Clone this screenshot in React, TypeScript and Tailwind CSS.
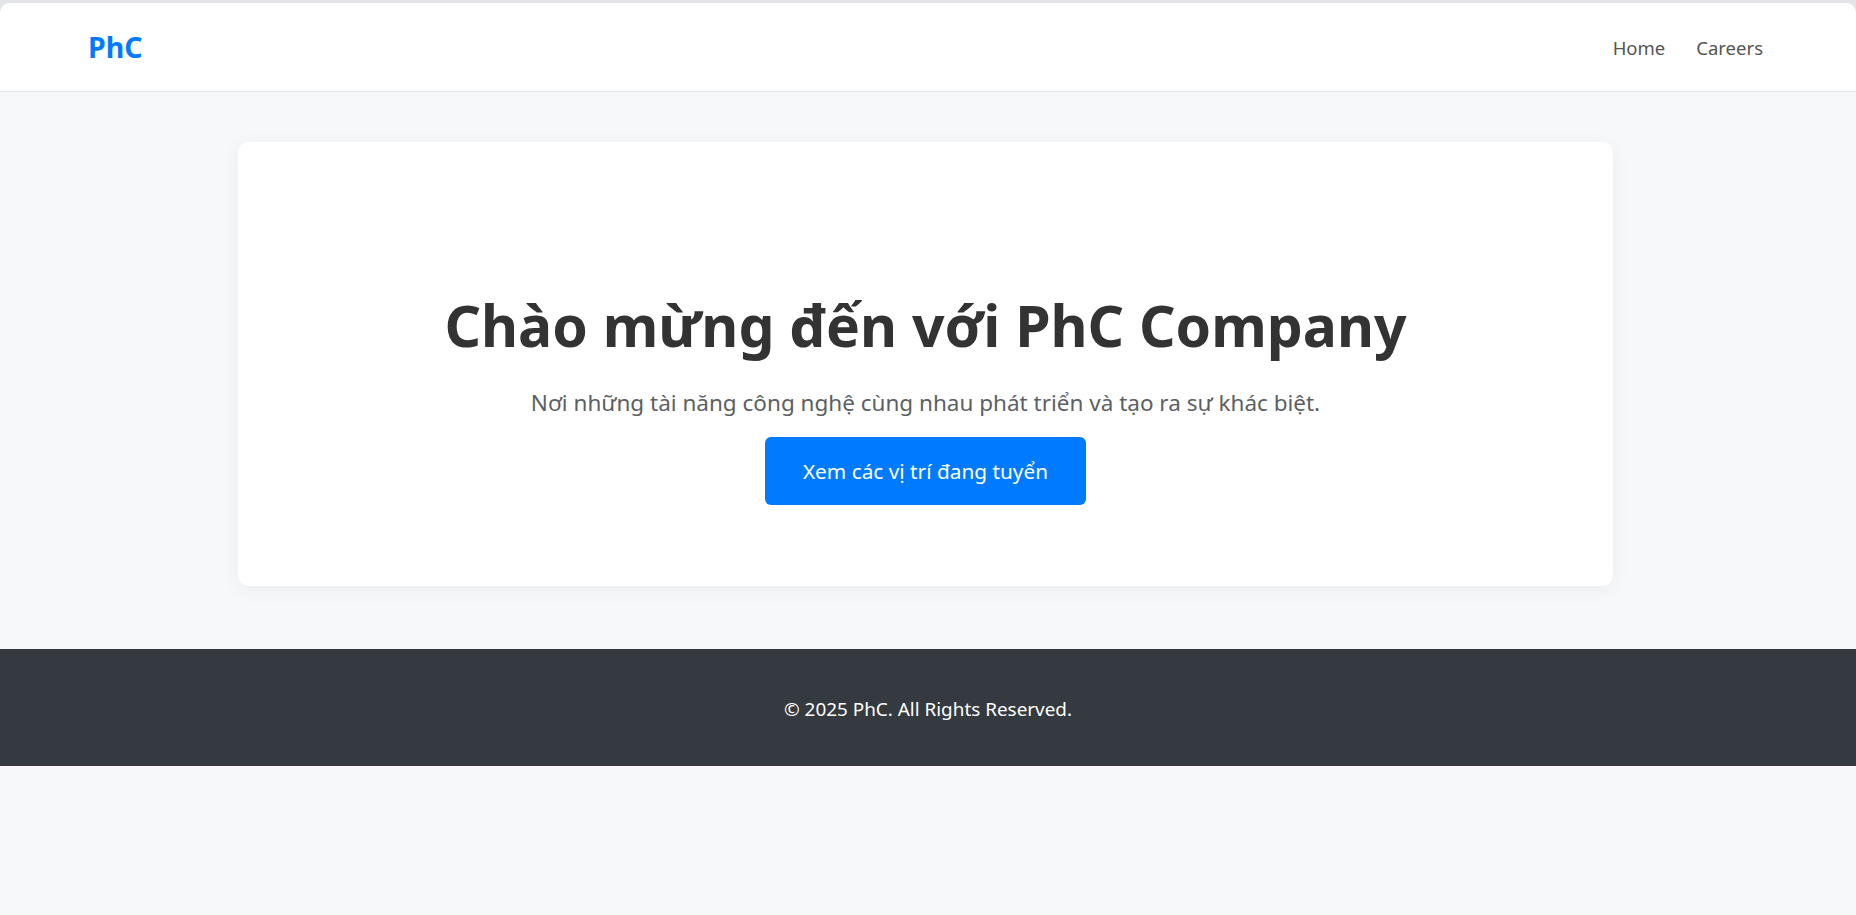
import React from "react";

const font = { fontFamily: '"Noto Sans", "Open Sans", sans-serif' };

const navLinks = ["Home", "Careers"];

const App: React.FC = () => {
  return (
    <div className="min-h-screen bg-[#e4e5e8] pt-[3px]" style={font}>
      <div className="min-h-[912px] rounded-t-[10px] overflow-hidden bg-[#f7f8fa] flex flex-col">
        <header className="h-[89px] shrink-0 bg-white border-b border-[#e3e5e8] flex items-center justify-between pl-[88px] pr-[93px]">
          <a href="#" className="text-[28.5px] font-bold text-[#007bff] leading-none">
            PhC
          </a>
          <nav className="flex items-center gap-[31px] mt-[2px]">
            {navLinks.map((link) => (
              <a key={link} href="#" className="text-[18.5px] text-[#555] leading-none">
                {link}
              </a>
            ))}
          </nav>
        </header>

        <main className="pt-[50px] pb-[63px]">
          <section className="w-[1375px] ml-[238px] bg-white rounded-[10px] shadow-[0_4px_20px_rgba(0,0,0,0.05)] flex flex-col items-center pt-[149px] pb-[81px]">
            <h1 className="text-[57px] font-bold text-[#333] leading-[1.2]">
              Chào mừng đến với PhC Company
            </h1>
            <p className="mt-[27px] text-[22.5px] leading-[1.5] text-[#5c5f63]">
              Nơi những tài năng công nghệ cùng nhau phát triển và tạo ra sự khác biệt.
            </p>
            <button
              type="button"
              className="mt-[17px] h-[68px] px-[38px] rounded-[6px] bg-[#007bff] text-white text-[20.8px] hover:bg-blue-600"
            >
              Xem các vị trí đang tuyển
            </button>
          </section>
        </main>

        <footer className="h-[117px] bg-[#343a40] flex items-center justify-center pt-[4px]">
          <p className="text-[18.9px] text-white">© 2025 PhC. All Rights Reserved.</p>
        </footer>
      </div>
    </div>
  );
};

export default App;
